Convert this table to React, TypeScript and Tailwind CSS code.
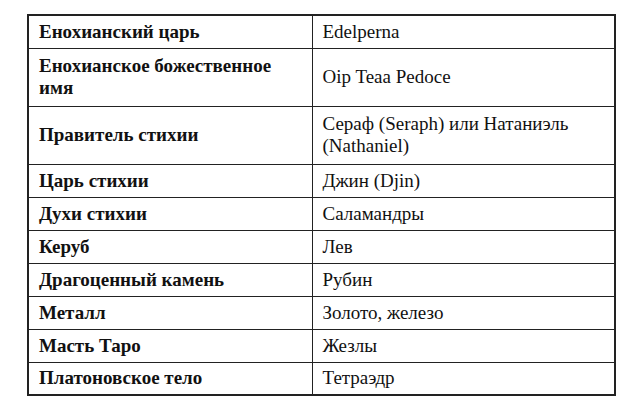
const rows: [string, string, number][] = [
  ['Енохианский царь', 'Edelperna', 33],
  ['Енохианское божественное имя', 'Oip Teaa Pedoce', 58],
  ['Правитель стихии', 'Сераф (Seraph) или Натаниэль (Nathaniel)', 58],
  ['Царь стихии', 'Джин (Djin)', 33],
  ['Духи стихии', 'Саламандры', 33],
  ['Керуб', 'Лев', 33],
  ['Драгоценный камень', 'Рубин', 33],
  ['Металл', 'Золото, железо', 33],
  ['Масть Таро', 'Жезлы', 33],
  ['Платоновское тело', 'Тетраэдр', 33],
];

export default function App() {
  return (
    <div className="w-[640px] h-[417px] bg-white pl-[27px] pt-[14px] text-[#111] font-serif">
      <table className="w-[589px] border-collapse border-2 border-[#222] table-fixed">
        <colgroup>
          <col className="w-[284px]" />
          <col />
        </colgroup>
        <tbody>
          {rows.map(([k, v, h]) => (
            <tr key={k} style={{ height: h }}>
              <td className="border-[1.5px] border-[#222] pl-[10px] pr-2 font-['Liberation_Serif',serif] font-bold text-[19px] leading-[22px] align-middle">
                {k}
              </td>
              <td className="border-[1.5px] border-[#222] pl-[10px] pr-2 font-['Liberation_Serif',serif] text-[19px] leading-[22px] align-middle">
                {v}
              </td>
            </tr>
          ))}
        </tbody>
      </table>
    </div>
  );
}
